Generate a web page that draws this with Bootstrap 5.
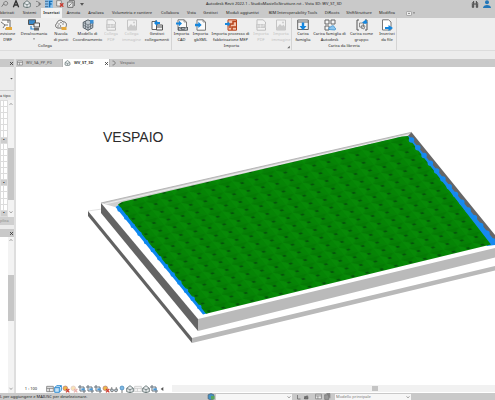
<!DOCTYPE html>
<html lang="it">
<head>
<meta charset="utf-8">
<meta name="viewport" content="width=device-width, initial-scale=1">
<title>Autodesk Revit 2022.1</title>
<link href="https://cdn.jsdelivr.net/npm/bootstrap@5.3.0/dist/css/bootstrap.min.css" rel="stylesheet">
<style>
body{font:4px/6px "Noto Sans","Open Sans",sans-serif;color:#222;background:#fff}
button{font:inherit;color:inherit;background:none;border:0;padding:0;white-space:nowrap}
svg{display:block;flex:none}
.bar{background:#c9c9c9}
.titlebar{height:8px}
.quick{width:206px;gap:3px;padding-left:1px}
.quick button{height:8px}
.quick .on{background:#8cc0ea}
.i8{width:8px;height:8px}
.i12{width:12px;height:12px}
.menus{display:grid;height:10px;grid-template-columns:18px 23px 21px 23px 22px 50px 26px 17px 21px 43px 58px 20px 34px 22px 26px;justify-items:center}
.menus .on{background:#f2f2f2;padding:0 2px;font-weight:600}
.menus .first{justify-self:start}
.ribbon{background:#eeeeee;height:33px;border-bottom:1px solid #dcdcdc}
.group{border-right:1px solid #d4d4d4;position:relative}
.tools{display:grid;height:25px}
.tools button{display:flex;flex-direction:column;align-items:center;line-height:6px;padding-top:1px}
.g1 .tools{grid-template-columns:19px 30px 24px 29px 18px 23px 28px}
.tools .first{align-items:start}
.g1 .caption{padding-right:81px}
.g2 .tools{grid-template-columns:19px 19px 41px 20px 20px}
.g3 .tools{grid-template-columns:22px 31px 33px 18px}
.off{opacity:.4;color:#777}
.band{height:8px;background:#ececec}
.side{width:16px;background:#ececec;border-right:2px solid #dedede}
.head{height:8px}
.kind{height:24px;border-bottom:1px solid #cfcfcf}
.edit{height:9px}
.cells{width:8px;border-collapse:collapse}
.cells td{height:6px;border:1px solid #dcdcdc;background:#fff;padding:0}
.cells td+td{width:4px}
.cells .sec td{background:#cdcdcd;text-align:center;font-size:4px;line-height:4px}
.props{height:117px}
.track{width:6px;background:#f3f3f3}
.thumb1{height:52px;margin-top:40px;background:#c6c6c6}
.thumb2{height:46px;margin-top:32px;background:#c6c6c6}
.apply{height:8px;background:#cfcfcf!important;color:#888!important;text-align:left}
.docs{height:8px}
.docs button{height:8px;width:47px;border-right:1px solid #b8b8b8;color:#555}
.docs .on{background:#fff;color:#222;font-weight:600}
.docs .open{border:0}
.docs button{gap:3px;padding-left:1px}
.view{min-height:0}
.label3d{font:14px "Liberation Sans",Arial,sans-serif;fill:#2b2b2b}
.viewbar{height:9px;background:#fff}
.scale{width:30px}
.hscroll{height:7px;background:#f1f1f1;margin-left:6px}
.hthumb{width:6px;height:5px;background:#c4c4c4;margin-left:62%}
.status{height:7px}
.msg{width:206px}
.status select{appearance:none;height:6px;width:76px;border:0;border-radius:0;background:#f6f6f6;font:inherit;color:#777;padding:0 1px}
.pick{display:grid}
.pick>*{grid-area:1/1}
.pick svg{justify-self:end;pointer-events:none}
</style>
<script src="https://cdn.jsdelivr.net/npm/bootstrap@5.3.0/dist/js/bootstrap.bundle.min.js"></script>
</head>
<body class="vh-100 d-flex flex-column overflow-hidden">
<svg width="0" height="0" class="position-absolute" aria-hidden="true">
<defs>
<symbol id="page" viewBox="0 0 12 12"><path d="M2 .8h6L10.500 3v8.200H2z" fill="#fafafa" stroke="#777"/><path d="M8 .8V3h2.500" fill="none" stroke="#777" stroke-width=".7"/></symbol>
<symbol id="arrow" viewBox="0 0 12 12"><path d="M0 4.600h4V2.200L8 6 4 9.700V7.400H0z" fill="#1586dd"/></symbol>
<symbol id="dwf" viewBox="0 0 12 12"><path d="M2 1h8v9H5M8 1v3" fill="#fafafa" stroke="#666"/><path d="M1 3l4 3-2 3M4 6h4" fill="none" stroke="#777"/><path d="M6 8h6v3H6z" fill="#e5a93c"/></symbol>
<symbol id="decal" viewBox="0 0 12 12"><path d="M.5.8h7v4.700h-7z" fill="#3988c8" stroke="#555"/><path d="M6 4h5.500v4H6z" fill="#eee" stroke="#555"/><path d="M3 7v3h3" fill="none" stroke="#2a86d0" stroke-width="1.200"/><path d="M6 9h5v2.500H6z" fill="#666"/></symbol>
<symbol id="cloud" viewBox="0 0 12 12"><path d="M3 9C0 9 0 5 2 4.500 2 1 7 0 8 3c4-1 4.500 5 1.500 6z" fill="#f4f4f4" stroke="#666"/><g fill="#666"><circle cx="4" cy="5" r=".7"/><circle cx="6" cy="3.500" r=".7"/><circle cx="8" cy="5" r=".7"/><circle cx="5.500" cy="7" r=".7"/><circle cx="3" cy="7" r=".7"/></g><path d="M6.500 8h5v3h-5z" fill="#e5a93c"/></symbol>
<symbol id="coord" viewBox="0 0 12 12"><path d="M6 .8l4.800 2.500v5.400L6 11.300 1.200 8.700V3.300z" fill="#bfc8cf" stroke="#59636b"/><path d="M1.200 3.300L6 6l4.800-2.700M6 6v5.300M3.500 2v7.800M8.500 2v7.800M1.200 6L6 8.700 10.800 6" fill="none" stroke="#59636b" stroke-width=".7"/><path d="M8 1h3.500v3.500H8z" fill="#3e8fd2"/></symbol>
<symbol id="pdf" viewBox="0 0 12 12"><path d="M2 .8h6L10.500 3v8.200H2z" fill="#fafafa" stroke="#777"/><path d="M1 5h10v4H1z" fill="#999"/><path d="M3 6v2M5 6v2h1V6zM8 8V6h1.500" stroke="#fff" stroke-width=".6" fill="none"/></symbol>
<symbol id="img" viewBox="0 0 12 12"><path d="M1.500 1h9v10h-9z" fill="#f7f7f7" stroke="#888"/><path d="M1.500 9L5 5l2 2 1.500-1.500 2 3V11h-9z" fill="#999"/><circle cx="8" cy="3.500" r="1" fill="#999"/></symbol>
<symbol id="links" viewBox="0 0 12 12"><path d="M1 2.500h5v8H1zM5 1v3" fill="#fff" stroke="#666"/><path d="M5.500 6h6v5h-6z" fill="#f2f2f2" stroke="#555"/><path d="M5.500 8h6" stroke="#555"/><path d="M3 4l3-3v2h3v2H6v2z" fill="#1586dd"/></symbol>
<symbol id="cad" viewBox="0 0 12 12"><use href="#page"/><use href="#arrow" width="9" height="9"/><path d="M2 8h10v3.500H2z" fill="#5b6268"/><path d="M5 9H3.500v1.500H5M6 10.500L7 9l1 1.500M9 9v1.500h1.500V9z" stroke="#fff" stroke-width=".5" fill="none"/></symbol>
<symbol id="xml" viewBox="0 0 12 12"><use href="#page"/><use href="#arrow" y="1" width="10" height="10"/></symbol>
<symbol id="mep" viewBox="0 0 12 12"><path d="M3 .8h8.500v10.400H3z" fill="#f3c4ad" stroke="#b6421a"/><path d="M5 9V5h3V2.500h3M7 11V8h4" fill="none" stroke="#b6421a" stroke-width="1.500"/><use href="#arrow" y="1" width="8" height="8"/></symbol>
<symbol id="fam" viewBox="0 0 12 12"><path d="M.7 1h10.600v9.500H.7z" fill="#f5f5f5" stroke="#666"/><path d="M.7 3h10.600" stroke="#666"/><path d="M4.800 3.500h2.400V7h2.300L6 11.200 2.500 7h2.300z" fill="#1586dd"/></symbol>
<symbol id="famcloud" viewBox="0 0 12 12"><path d="M1 1h4v4H1zM7 1h4v4H7zM1 7h4v4H1z" fill="#f5f5f5" stroke="#666"/><path d="M5 10.500c-1-2 1-3 2-2.500.5-2 3.500-1.500 3.500.5 1.500.3 1.500 2.500 0 2.500z" fill="#8bc5ee" stroke="#2f89cc" stroke-width=".7"/></symbol>
<symbol id="grp" viewBox="0 0 12 12"><path d="M3 1H1v10h2M9 1h2v10H9" fill="none" stroke="#555"/><path d="M3.500 4h4v4h-4zM6 6l3 1-1 3-3-1z" fill="#eee" stroke="#777" stroke-width=".8"/><path d="M6 3.500L10 .5 11.500 4 9 5z" fill="#1586dd"/></symbol>
<symbol id="file" viewBox="0 0 12 12"><path d="M1.500.8h6L10 3v8H1.500z" fill="#fff" stroke="#777"/><path d="M4 8h3.500V6L12 9 7.500 12v-2H4z" fill="#1586dd"/></symbol>
<symbol id="house" viewBox="0 0 12 12"><path d="M1 5l5-4 5 4v5l-5 1.500L1 10z" fill="#e7eaec" stroke="#566" stroke-width="1.200"/><path d="M1 5l5 2 5-2M6 7v4" fill="none" stroke="#566"/></symbol>
<symbol id="down" viewBox="0 0 12 12"><path d="M3 4.500h6L6 8.500z" fill="#555"/></symbol>
<symbol id="chev" viewBox="0 0 12 12"><path d="M3 4.500L6 8l3-3.500" fill="none" stroke="#777" stroke-width="1.200"/></symbol>
<symbol id="chevup" viewBox="0 0 12 12"><path d="M3 8l3-3.500L9 8" fill="none" stroke="#777" stroke-width="1.200"/></symbol>
<symbol id="close" viewBox="0 0 12 12"><path d="M2.500 2.500l7 7m0-7l-7 7" stroke="#333" stroke-width="2"/></symbol>
<symbol id="sheet" viewBox="0 0 12 12"><path d="M1 2h10v8H1zM1 5h10M5 5v5" fill="#ededed" stroke="#777" stroke-width="1.200"/></symbol>
<symbol id="box" viewBox="0 0 12 12"><path d="M1 4h7v7H1zM1 4l3-3h7L8 4M11 1v7l-3 3" fill="#c3e2f7" stroke="#1d81cc" stroke-width="1.300"/></symbol>
<symbol id="sun" viewBox="0 0 12 12"><circle cx="5" cy="5" r="3.500" fill="#f1b84a" stroke="#a77"/><path d="M6 6l5 5m0-5l-5 5" stroke="#cf3d32" stroke-width="1.800"/></symbol>
<symbol id="crop" viewBox="0 0 12 12"><path d="M3 0v9h9M0 3h9v9" fill="none" stroke="#65717b" stroke-width="1.500"/><path d="M5 5h5v3H5z" fill="#4998d6"/></symbol>
<symbol id="glass" viewBox="0 0 12 12"><path d="M1 7L3 3M11 7L9 3" stroke="#555"/><circle cx="3" cy="8" r="2.200" fill="#b8c7d2" stroke="#555"/><circle cx="9" cy="8" r="2.200" fill="#b8c7d2" stroke="#555"/></symbol>
<symbol id="bulb" viewBox="0 0 12 12"><circle cx="6" cy="4.500" r="3" fill="#7db8e3" stroke="#3b80b5"/><path d="M4.500 9h3M5 11h2" stroke="#555"/></symbol>
</defs>
</svg>

<header>
<div class="titlebar bar d-flex align-items-center">
<div class="quick d-flex align-items-center">
<button aria-label="Misura"><svg class="i8" viewBox="0 0 12 12"><path d="M1 10l3-4M4 6c0-5 6-5 6-1 0 3-4 4-6 1" fill="none" stroke="#666" stroke-width="1.200"/></svg></button>
<button aria-label="Testo"><svg class="i8" viewBox="0 0 12 12"><path d="M2 11L6 1l4 10M3.500 7.500h5" fill="none" stroke="#333" stroke-width="2"/></svg></button>
<button aria-label="Vista 3D"><svg class="i8"><use href="#house"/></svg></button>
<button aria-label="Sezione"><svg class="i8" viewBox="0 0 12 12"><path d="M3 2c7 0 7 8 0 8" fill="none" stroke="#777" stroke-width="1.300"/><path d="M7 3l4 3-4 3z" fill="#777"/></svg></button>
<button class="on" aria-label="Linee sottili"><svg class="i8" viewBox="0 0 12 12"><path d="M0 2h5M0 6h5M0 10h5" stroke="#246"/><path d="M7 1v10M7 2h4M7 6h3" stroke="#1670b8" stroke-width="2"/></svg></button>
<button aria-label="Chiudi inattive"><svg class="i8" viewBox="0 0 12 12"><path d="M1 1h7v8H1z" fill="#eee" stroke="#666"/><path d="M6 5l5 5m0-5l-5 5" stroke="#c8392e" stroke-width="2"/></svg></button>
<button aria-label="Cambia finestra"><svg class="i8" viewBox="0 0 12 12"><path d="M1 3h8v8H1zM3 1h8v8" fill="#e6e6e6" stroke="#555" stroke-width="1.200"/><path d="M3 9l4-4" stroke="#555"/></svg></button>
<button aria-label="Personalizza"><svg class="i8"><use href="#down"/></svg></button>
</div>
<div class="flex-fill text-nowrap">Autodesk Revit 2022.1 - StudioMasielloStrutture.rvt - Vista 3D: WV_ST_3D</div>
<button aria-label="Cerca"><svg class="i8" viewBox="0 0 12 12"><path d="M2 11V5l2-3v9zM10 11V5L8 2v9zM4 6h4" fill="#eee" stroke="#444" stroke-width="1.500"/></svg></button>
<button class="px-1" aria-label="Account"><svg class="i8" viewBox="0 0 12 12"><circle cx="6" cy="3.500" r="3" fill="#2377b9"/><path d="M0 12c0-6 12-6 12 0z" fill="#2377b9"/></svg></button>
</div>
<nav class="menus bar">
<button class="first">bbricati</button><button>Sistemi</button><button class="on">Inserisci</button><button>Annota</button><button>Analizza</button><button>Volumetria e cantiere</button><button>Collabora</button><button>Vista</button><button>Gestisci</button><button>Moduli aggiuntivi</button><button>BIM Interoperability Tools</button><button>DiRoots</button><button>ShiftStrutture</button><button>Modifica</button>
<button class="d-flex align-items-center" aria-label="Riduci"><svg width="6" height="5" viewBox="0 0 12 10"><rect x="1" y="1" width="10" height="8" rx="2" fill="#eee" stroke="#777"/><path d="M4 6l2-3 2 3z" fill="#666"/></svg><svg width="4" height="4"><use href="#down"/></svg></button>
</nav>
<div class="ribbon d-flex">
<section class="group g1"><div class="tools">
<button class="first"><svg class="i12"><use href="#dwf"/></svg><span>evisione<br>DWF</span></button>
<button><svg class="i12"><use href="#decal"/></svg><span>Decalcomania</span><svg width="4" height="4"><use href="#down"/></svg></button>
<button><svg class="i12"><use href="#cloud"/></svg><span>Nuvola<br>di punti</span></button>
<button><svg class="i12"><use href="#coord"/></svg><span>Modello di<br>Coordinamento</span></button>
<button class="off"><svg class="i12"><use href="#pdf"/></svg><span>Collega<br>PDF</span></button>
<button class="off"><svg class="i12"><use href="#img"/></svg><span>Collega<br>immagine</span></button>
<button><svg class="i12"><use href="#links"/></svg><span>Gestisci<br>collegamenti</span></button>
</div><div class="caption text-center">Collega</div></section>
<section class="group g2"><div class="tools">
<button><svg class="i12"><use href="#cad"/></svg><span>Importa<br>CAD</span></button>
<button><svg class="i12"><use href="#xml"/></svg><span>Importa<br>gbXML</span></button>
<button><svg class="i12"><use href="#mep"/></svg><span>Importa processo di<br>fabbricazione MEP</span></button>
<button class="off"><svg class="i12"><use href="#pdf"/></svg><span>Importa<br>PDF</span></button>
<button class="off"><svg class="i12"><use href="#img"/></svg><span>Importa<br>immagine</span></button>
</div><div class="caption text-center">Importa</div><svg class="position-absolute bottom-0 end-0" width="5" height="6" viewBox="0 0 12 12"><path d="M9 3v6H3z" fill="#666"/></svg></section>
<section class="group g3"><div class="tools">
<button><svg class="i12"><use href="#fam"/></svg><span>Carica<br>famiglia</span></button>
<button><svg class="i12"><use href="#famcloud"/></svg><span>Carica famiglia di<br>Autodesk</span></button>
<button><svg class="i12"><use href="#grp"/></svg><span>Carica come<br>gruppo</span></button>
<button><svg class="i12"><use href="#file"/></svg><span>Inserisci<br>da file</span></button>
</div><div class="caption text-center">Carica da libreria</div></section>
</div>
<div class="band"></div>
</header>

<main class="d-flex flex-fill view">
<aside class="side d-flex flex-column">
<div class="head bar d-flex justify-content-end align-items-center"><button aria-label="Chiudi proprietà"><svg width="5" height="5"><use href="#close"/></svg></button></div>
<div class="kind d-flex justify-content-end align-items-center"><svg width="5" height="5"><use href="#down"/></svg></div>
<div class="edit d-flex align-items-center"><button>a tipo</button></div>
<div class="props d-flex">
<table class="cells"><tbody><tr><td></td><td></td></tr><tr><td></td><td></td></tr><tr><td></td><td></td></tr><tr><td></td><td></td></tr><tr><td></td><td></td></tr><tr><td></td><td></td></tr><tr class="sec"><td colspan="2">▪</td></tr><tr><td></td><td></td></tr><tr><td></td><td></td></tr><tr><td></td><td></td></tr><tr><td></td><td></td></tr><tr><td></td><td></td></tr><tr><td></td><td></td></tr><tr class="sec"><td colspan="2">▪</td></tr><tr><td></td><td></td></tr><tr><td></td><td></td></tr><tr><td></td><td></td></tr><tr><td></td><td></td></tr><tr class="sec"><td colspan="2">▪</td></tr></tbody></table>
<div class="track"><svg width="6" height="8"><use href="#chevup"/></svg><div class="thumb1"></div><svg class="mt-2" width="6" height="8"><use href="#chev"/></svg></div>
</div>
<button class="apply">plica</button>
<div class="head bar d-flex justify-content-end align-items-center mt-1"><button aria-label="Chiudi browser"><svg width="5" height="5"><use href="#close"/></svg></button></div>
<div class="d-flex flex-fill bg-white justify-content-end"><div class="track d-flex flex-column"><svg width="6" height="6"><use href="#chevup"/></svg><div class="thumb2"></div><svg class="mt-auto" width="6" height="9"><use href="#chev"/></svg></div></div>
</aside>
<div class="d-flex flex-column flex-fill">
<nav class="docs bar d-flex">
<button class="d-flex align-items-center"><svg width="6" height="6"><use href="#sheet"/></svg>WV_SA_PP_P0</button>
<button class="on d-flex align-items-center"><svg width="7" height="6"><use href="#house"/></svg>WV_ST_3D<svg class="ms-auto" width="5" height="5"><use href="#close"/></svg></button>
<button class="open d-flex align-items-center"><svg width="6" height="6" viewBox="0 0 12 12"><path d="M3 2c7 0 7 8 0 8" fill="none" stroke="#666" stroke-width="1.500"/></svg>Vespaio</button>
</nav>
<div class="flex-fill view">
<svg width="100%" height="100%" viewBox="16 67 479 317" preserveAspectRatio="xMinYMin meet" role="img" aria-label="Modello 3D del vespaio">
<defs>
<pattern id="domes" width="10" height="10" patternUnits="userSpaceOnUse" patternTransform="matrix(1.440 -.350 .630 .770 203 188)">
<rect width="10" height="10" fill="#058505"/>
<path d="M0 0h10L5 5z" fill="#047b04"/><path d="M0 0l5 5-5 5z" fill="#078a07"/><path d="M1 10l4-5 4 5z" fill="#068006"/>
<ellipse cx="5" cy="5" rx="1.400" ry="1" fill="#04520a"/>
</pattern>
</defs>
<text x="103" y="142" class="label3d">VESPAIO</text>
<path d="M88 211l13-1.500 94 114.500 300-72v14L192 338z" fill="#fff"/>
<path d="M88 211l14-2" stroke="#e2e2e2" fill="none"/>
<path d="M88 211v5l104 127v-5z" fill="#626262"/>
<path d="M192 338v5l303-72.500V266z" fill="#b9b9b9"/>
<path d="M101 203L411.500 132.300 495 235v13L198 319z" fill="#fff"/>
<path d="M101 203L411.500 132.300 412 137 115 207z" fill="#cfcfcf"/>
<path d="M101 203L411.500 132.300" stroke="#a9a9a9" stroke-width=".8"/>
<path d="M105 204L410 134.500" stroke="#ececec" stroke-width="1.200"/>
<path d="M411.500 132.300L495 235v9L407 137z" fill="#666"/>
<path d="M101 203v10l97 118v-12z" fill="#646464"/>
<path d="M198 319v12l297-73.500V248z" fill="#bababa"/>
<path d="M409 136L495 241v4l-8 1-83-109z" fill="#168af0"/>
<path d="M119 205L407 136.500" stroke="#2a8fd8" stroke-width="2" stroke-dasharray="5 10"/>
<path d="M115.500 207L203 314.500l7-2L122 203z" fill="#0c87ef"/>
<path d="M118 204.500l4-2.500L402 136.500l6-.5 3 5 80 103.500L206 313.700z" fill="url(#domes)"/>
<path d="M119.500 209.500L203 311.500" stroke="#0c87ef" stroke-width="4.500" stroke-linecap="round" stroke-dasharray="0 10.500"/>
<path d="M411.500 140L494 242" stroke="#168af0" stroke-width="5.500" stroke-linecap="round" stroke-dasharray="0 10"/>
</svg>
</div>
<div class="viewbar d-flex align-items-center">
<div class="scale text-center">1 : 100</div>
<div class="d-flex gap-0">
<svg class="i8"><use href="#sheet"/></svg><svg class="i8"><use href="#box"/></svg><svg class="i8"><use href="#sun"/></svg><svg class="i8 off"><use href="#sun"/></svg><svg class="i8"><use href="#crop"/></svg><svg class="i8"><use href="#crop"/></svg><svg class="i8"><use href="#crop"/></svg><svg class="i8"><use href="#sun"/></svg><svg class="i8"><use href="#glass"/></svg><svg class="i8"><use href="#bulb"/></svg><svg class="i8"><use href="#house"/></svg><svg class="i8 off"><use href="#sheet"/></svg><svg class="i8"><use href="#house"/></svg><svg class="i8"><use href="#crop"/></svg><svg class="i8" viewBox="0 0 12 12"><path d="M8 3v6L4 6z" fill="#555"/></svg>
</div>
<div class="hscroll flex-fill d-flex align-items-center"><div class="hthumb"></div></div>
</div>
</div>
</main>

<footer class="status bar d-flex align-items-center">
<div class="msg text-nowrap">L per aggiungere e MAIUSC per deselezionare.</div>
<svg width="10" height="7" viewBox="0 0 12 12"><path d="M1 3l5-2 5 2v7l-5 2-5-2z" fill="#4592c4" stroke="#456"/><path d="M6 5h6v6H6z" fill="#58a55c"/></svg>
<div class="pick"><select aria-label="Workset attivo"><option></option></select><svg width="6" height="6"><use href="#chev"/></svg></div>
<svg class="ms-1" width="6" height="6" viewBox="0 0 12 12"><path d="M3 2v8h6" fill="none" stroke="#666" stroke-width="1.500"/></svg>
<svg width="8" height="6" viewBox="0 0 12 12"><path d="M2 10L9 2M3 5h7v5H3z" stroke="#555" fill="#777"/></svg>
<svg class="ms-1" width="9" height="7"><use href="#sheet"/></svg>
<svg class="me-1" width="8" height="7" viewBox="0 0 12 12"><path d="M2 3h7v8H2zM5 1h6v8" fill="#999" stroke="#666"/></svg>
<div class="pick"><select aria-label="Opzione di progetto"><option>Modello principale</option></select><svg width="6" height="6"><use href="#chev"/></svg></div>
</footer>
</body>
</html>
